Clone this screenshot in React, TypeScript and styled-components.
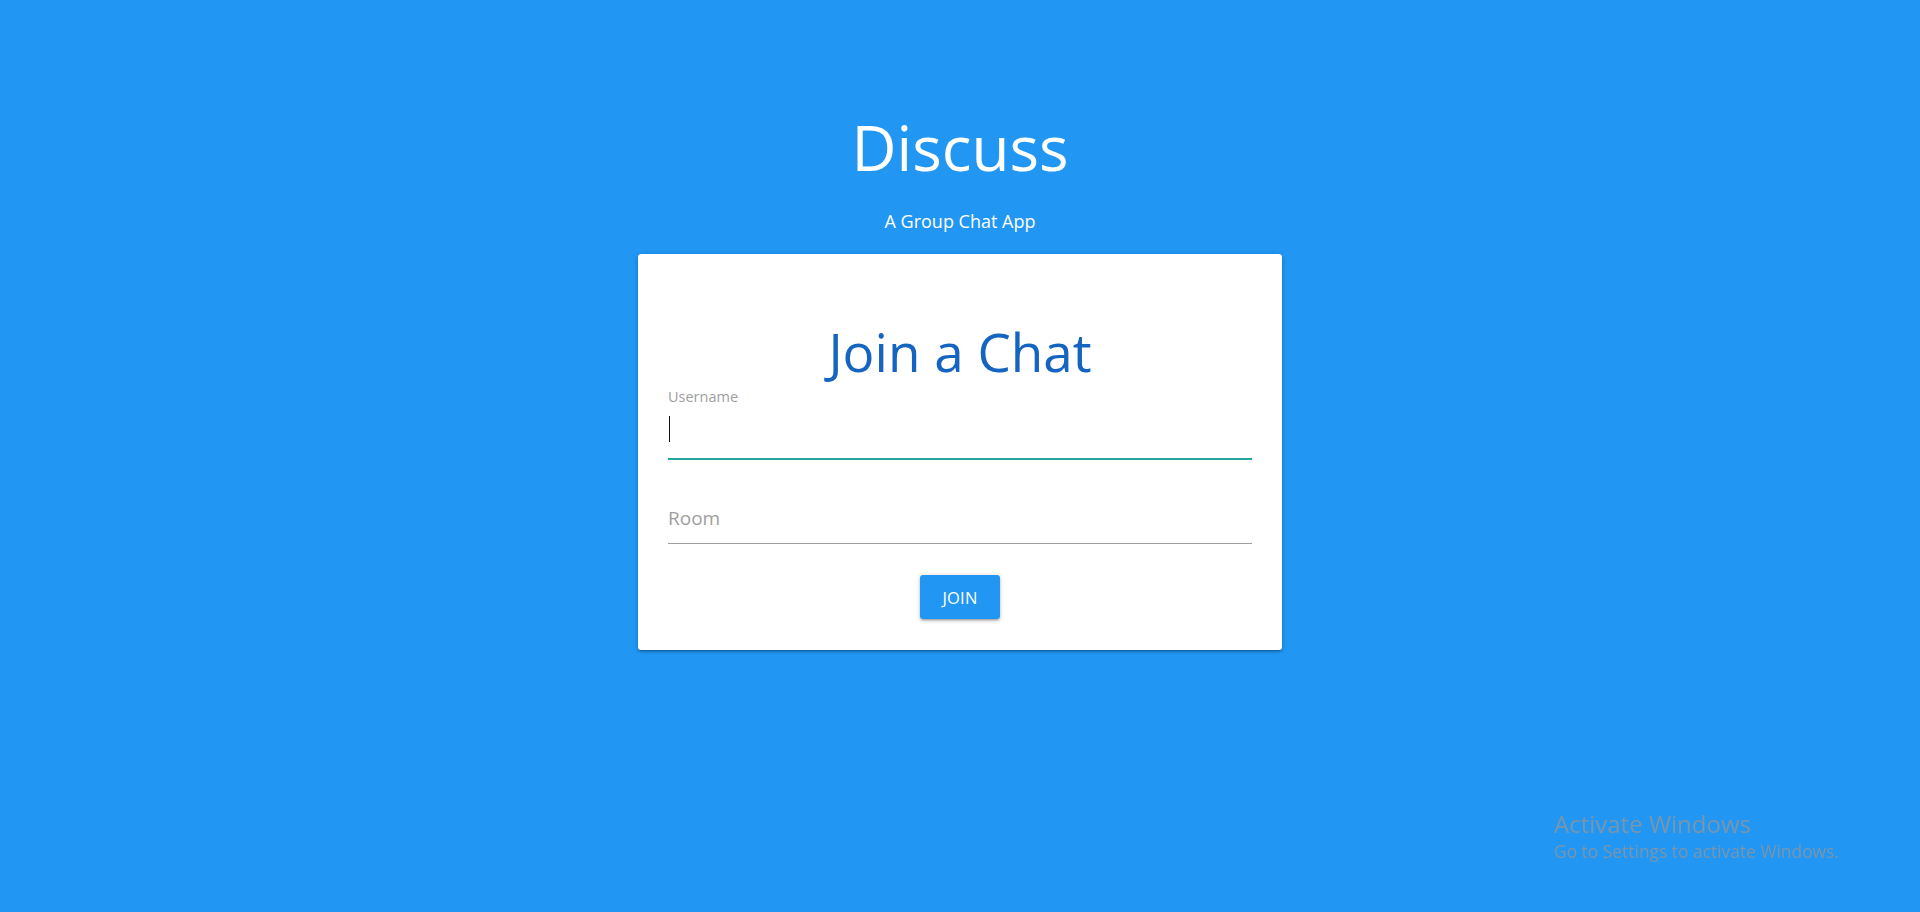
import React from "react";
import styled, { createGlobalStyle } from "styled-components";

const GlobalStyle = createGlobalStyle`
  html, body {
    margin: 0;
    padding: 0;
    background: #2196f3;
    font-family: "Open Sans", "Noto Sans", "Liberation Sans", sans-serif;
  }
  * { box-sizing: border-box; }
`;

const Page = styled.main`
  min-height: 912px;
  display: flex;
  flex-direction: column;
  align-items: center;
  padding-top: 113px;
`;

const Title = styled.h1`
  margin: 0;
  font-size: 62px;
  line-height: 68px;
  font-weight: 400;
  color: #ffffff;
`;

const Subtitle = styled.p`
  margin: 28px 0 0;
  font-size: 18px;
  line-height: 24px;
  color: #ffffff;
`;

const Card = styled.section`
  margin-top: 21px;
  width: 644px;
  background: #ffffff;
  border-radius: 3px;
  padding: 69px 30px 31px;
  display: flex;
  flex-direction: column;
  box-shadow: 0 2px 2px 0 rgba(0, 0, 0, 0.14), 0 3px 1px -2px rgba(0, 0, 0, 0.12),
    0 1px 5px 0 rgba(0, 0, 0, 0.2);
`;

const CardTitle = styled.h2`
  margin: 0;
  text-align: center;
  font-size: 53px;
  line-height: 58px;
  font-weight: 400;
  color: #1565c0;
`;

const Field = styled.div<{ $gap: number }>`
  position: relative;
  display: flex;
  flex-direction: column;
  margin-top: ${(p) => p.$gap}px;
`;

const Label = styled.label`
  font-size: 14.5px;
  line-height: 18px;
  color: #9e9e9e;
`;

const Input = styled.input<{ $focused?: boolean; $h: number }>`
  display: block;
  width: 100%;
  height: ${(p) => p.$h}px;
  border: none;
  outline: none;
  padding: 0;
  background: transparent;
  font-family: inherit;
  font-size: 19px;
  color: #212121;
  border-bottom: ${(p) => (p.$focused ? "2px solid #26a69a" : "1px solid #9e9e9e")};
  &::placeholder {
    color: #9e9e9e;
  }
`;

const Caret = styled.span`
  position: absolute;
  left: 1px;
  top: 28px;
  width: 1px;
  height: 26px;
  background: #111111;
`;

const ButtonRow = styled.div`
  display: flex;
  justify-content: center;
  margin-top: 31px;
`;

const JoinButton = styled.button`
  height: 44px;
  width: 80px;
  border: none;
  border-radius: 3px;
  background: #2196f3;
  color: #ffffff;
  font-family: inherit;
  font-size: 16.5px;
  letter-spacing: 0.2px;
  text-transform: uppercase;
  cursor: pointer;
  box-shadow: 0 2px 2px 0 rgba(0, 0, 0, 0.14), 0 3px 1px -2px rgba(0, 0, 0, 0.12),
    0 1px 5px 0 rgba(0, 0, 0, 0.2);
`;

const Watermark = styled.div`
  position: fixed;
  left: 1554px;
  top: 808px;
  color: rgba(150, 150, 150, 0.75);
  pointer-events: none;
`;

const WatermarkTitle = styled.div`
  font-size: 24px;
  line-height: 31px;
`;

const WatermarkText = styled.div`
  font-size: 17.4px;
  line-height: 24px;
`;

export default function App() {
  return (
    <>
      <GlobalStyle />
      <Page>
        <Title>Discuss</Title>
        <Subtitle>A Group Chat App</Subtitle>
        <Card>
          <CardTitle>Join a Chat</CardTitle>
          <Field $gap={7}>
            <Label htmlFor="username">Username</Label>
            <Input id="username" $focused $h={54} />
            <Caret />
          </Field>
          <Field $gap={33}>
            <Input id="room" placeholder="Room" $h={51} />
          </Field>
          <ButtonRow>
            <JoinButton>Join</JoinButton>
          </ButtonRow>
        </Card>
      </Page>
      <Watermark>
        <WatermarkTitle>Activate Windows</WatermarkTitle>
        <WatermarkText>Go to Settings to activate Windows.</WatermarkText>
      </Watermark>
    </>
  );
}
